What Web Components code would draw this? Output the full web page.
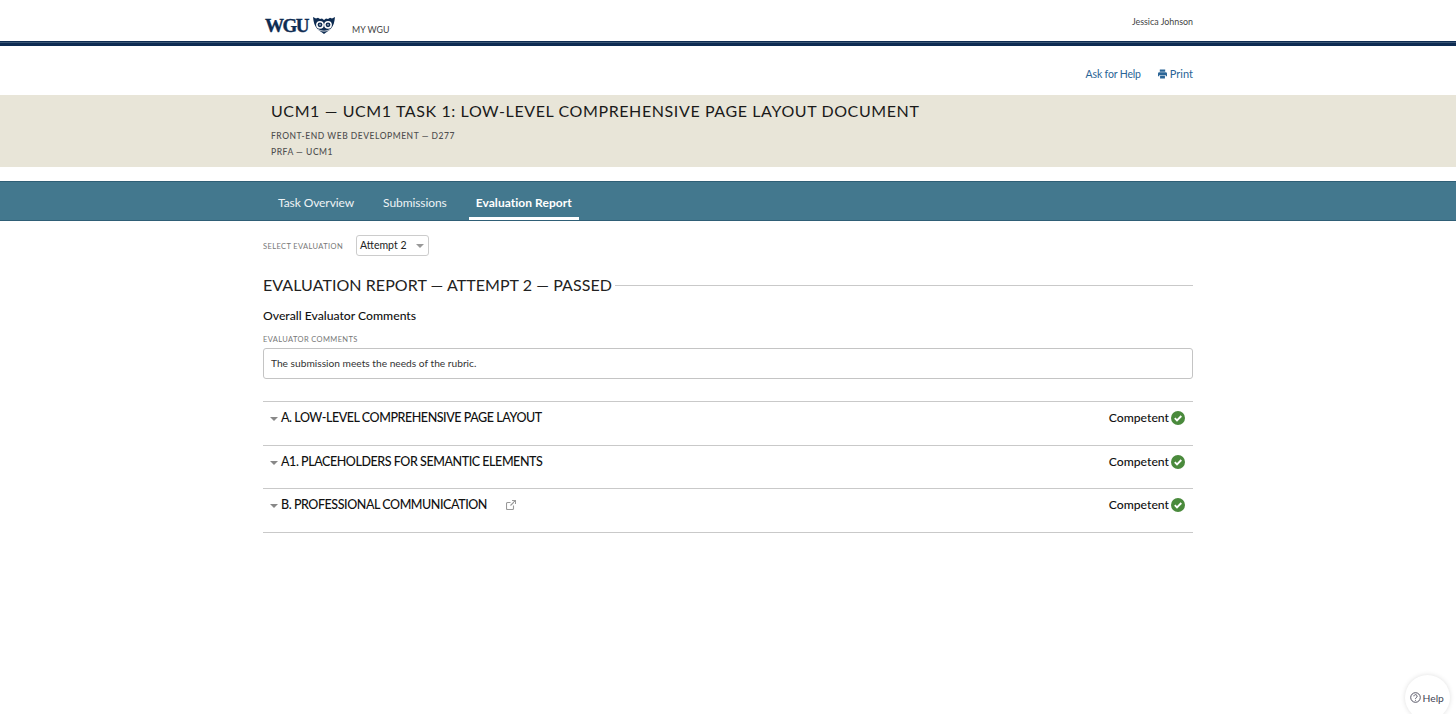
<!DOCTYPE html>
<html><head><meta charset="utf-8"><style>
html,body{margin:0;padding:0;background:#fff;font-family:Lato,sans-serif;color:#111}
body{height:714px;overflow:hidden;position:relative}
</style></head><body>
<wgu-header></wgu-header>
<util-bar></util-bar>
<title-banner></title-banner>
<tab-bar></tab-bar>
<report-body>
  <eval-select></eval-select>
  <report-heading>EVALUATION REPORT — ATTEMPT 2 — PASSED</report-heading>
  <overall-comments></overall-comments>
  <rubric-list>
    <rubric-row title="A. LOW-LEVEL COMPREHENSIVE PAGE LAYOUT"></rubric-row>
    <rubric-row title="A1. PLACEHOLDERS FOR SEMANTIC ELEMENTS"></rubric-row>
    <rubric-row title="B. PROFESSIONAL COMMUNICATION" link></rubric-row>
  </rubric-list>
</report-body>
<help-fab></help-fab>
<script>
function def(name,html){customElements.define(name,class extends HTMLElement{
  connectedCallback(){if(this.shadowRoot)return;const r=this.attachShadow({mode:'open'});r.innerHTML=typeof html==='function'?html(this):html;}
});}
const wrap='width:930px;margin:0 auto;box-sizing:border-box;';
def('wgu-header',`<style>
:host{display:block;height:46px;box-sizing:border-box;border-bottom:3px solid #0e2c52;position:relative}
.w{${wrap}height:41px;display:flex;align-items:flex-start}
.l1{height:1px;background:#0e2c52}.l2{height:1px;background:#3a5675}
.logo{display:flex;align-items:center;margin:17px 0 0 2px;height:17px;gap:5px}
.t{font:bold 19px/17px "Liberation Serif",serif;color:#0e2c52;letter-spacing:-1.500px;-webkit-text-stroke:.35px #0e2c52}
.my{font-size:8.800px;color:#444;margin:20px 0 0 17px;line-height:20px}
.u{margin-left:auto;font-size:8.900px;color:#444;line-height:12px;margin-top:16px}
</style><div class="w"><div class="logo"><span class="t">WGU</span>
<svg width="22" height="17" viewBox="0 0 22 17"><path d="M0 0 L3 1.500 L5 .8 L7 2 L9 1.500 L11 3 L13 1.500 L15 2 L17 .8 L19 1.500 L22 0 C21.500 5 20.500 9 18 11.500 C16 14 13 15 11 17 C9 15 6 14 4 11.500 C1.500 9 .5 5 0 0Z" fill="#0e2c52"/><circle cx="7" cy="7.800" r="3.900" fill="#fff"/><circle cx="15" cy="7.800" r="3.900" fill="#fff"/><circle cx="7" cy="7.800" r="2.400" fill="#0e2c52"/><circle cx="15" cy="7.800" r="2.400" fill="#0e2c52"/><circle cx="7" cy="7.800" r="1" fill="#8b9ab0"/><circle cx="15" cy="7.800" r="1" fill="#8b9ab0"/><path d="M4.500 12.300 Q11 16 17.500 12.300" stroke="#fff" stroke-width=".8" fill="none"/></svg></div>
<span class="my">MY WGU</span><span class="u">Jessica Johnson</span></div><div class="l1"></div><div class="l2"></div>`);
def('util-bar',`<style>
:host{display:block;height:49px}
.w{${wrap}display:flex;justify-content:flex-end;align-items:center;gap:17px;padding-top:21px;font-size:11px;line-height:14px;color:#2a6496}
.a{font-size:10.500px;letter-spacing:-.16px}
.p{display:flex;align-items:center;gap:3px}
</style><div class="w"><span class="a">Ask for Help</span><span class="p"><svg width="9" height="10" viewBox="0 0 10 11" fill="#2a6496"><path d="M2 .5h6v2.500H2Z"/><path d="M1.500 3.500h7A1.500 1.500 0 0 1 10 5v3H8.500V6.500h-7V8H0V5a1.500 1.500 0 0 1 1.500-1.500Z"/><rect x="2.300" y="7.200" width="5.400" height="3.300"/></svg>Print</span></div>`);
def('title-banner',`<style>
:host{display:block;height:72px;background:#e8e5d8}
.w{${wrap}padding:6px 0 0 8px}
h1{margin:0;font-weight:400;font-size:16px;line-height:20px;letter-spacing:.6px;color:#1a1a1a}
p{margin:0;font-size:8.500px;font-weight:500;letter-spacing:.53px;color:#4f4f4f;line-height:16px}
.a{margin-top:7px}
</style><div class="w"><h1>UCM1 — UCM1 TASK 1: LOW-LEVEL COMPREHENSIVE PAGE LAYOUT DOCUMENT</h1><p class="a">FRONT-END WEB DEVELOPMENT — D277</p><p>PRFA — UCM1</p></div>`);
def('tab-bar',`<style>
:host{display:block;height:40px;margin-top:14px;background:#43788e;border-top:1px solid #2f5f76;border-bottom:1px solid #2f5f76;box-sizing:border-box}
.w{${wrap}display:flex;height:38px;padding-left:8px;gap:15px}
a{display:block;padding:0 7px;font-size:12px;letter-spacing:-.08px;line-height:41px;color:#eef3f5;height:38px;box-sizing:border-box}
a.on{font-weight:700;color:#fff;letter-spacing:.05px;border-bottom:3px solid #fff}
</style><div class="w"><a>Task Overview</a><a>Submissions</a><a class="on">Evaluation Report</a></div>`);
def('report-body',`<style>:host{display:block;${wrap}padding-top:14px}</style><slot></slot>`);
def('eval-select',`<style>
:host{display:flex;align-items:center;height:21px}
.l{font-size:7.500px;letter-spacing:.38px;color:#777;width:93px;padding-top:1px}
.s{box-sizing:border-box;width:73px;height:21px;border:1px solid #ccc;border-radius:3px;display:flex;align-items:center;padding:0 0 1px 3px;font-size:10.500px;color:#222;position:relative}
i{position:absolute;right:4px;top:8px;border:4px solid transparent;border-top-color:#999;border-bottom:0}
</style><span class="l">SELECT EVALUATION</span><span class="s">Attempt 2<i></i></span>`);
def('report-heading',`<style>
:host{display:flex;align-items:center;margin-top:19px;height:20px;font-size:16px;line-height:20px;color:#222;letter-spacing:.06px;white-space:nowrap}
:host::after{content:"";flex:1;height:1px;background:#c9c9c9;margin-left:3px}
</style><slot></slot>`);
def('overall-comments',`<style>
:host{display:block;margin-top:13px}
h3{margin:0;font-size:12.200px;line-height:16px;font-weight:500;color:#111}
.l{font-size:7.500px;letter-spacing:.38px;color:#777;margin-top:11px;line-height:10px}
.b{box-sizing:border-box;height:31px;margin-top:3px;border:1px solid #c4c4c4;border-radius:3px;padding:0 7px;font-size:10.200px;line-height:29px;color:#333}
</style><h3>Overall Evaluator Comments</h3><div class="l">EVALUATOR COMMENTS</div><div class="b">The submission meets the needs of the rubric.</div>`);
def('rubric-list',`<style>:host{display:block;margin-top:22px;border-bottom:1px solid #c9c9c9}</style><slot></slot>`);
def('rubric-row',h=>`<style>
:host{display:flex;box-sizing:border-box;height:43.500px;border-top:1px solid #c9c9c9;padding:8px 8px 0 7px;align-items:flex-start}
i.c{border:4px solid transparent;border-top-color:#888;border-bottom:0;margin:7px 3px 0 0}
.t{font-size:12.500px;line-height:15px;font-weight:500;color:#111;letter-spacing:-.44px;white-space:nowrap}
.x{margin:3px 0 0 19px}
.r{margin-left:auto;display:flex;align-items:center;gap:2px;font-size:12.200px;line-height:16px;color:#111;font-weight:500}
</style><i class="c"></i><span class="t">${h.getAttribute('title')}</span>${h.hasAttribute('link')?`<svg class="x" width="10" height="10" viewBox="0 0 10 10" fill="none" stroke="#999" stroke-width="1.100"><path d="M7.500 5.500v3a1 1 0 0 1-1 1h-5a1 1 0 0 1-1-1v-5a1 1 0 0 1 1-1h3"/><path d="M6 .5h3.500V4M9.500 .5 4.500 5.500"/></svg>`:''}
<span class="r">Competent<svg width="14" height="14" viewBox="0 0 14 14"><circle cx="7" cy="7" r="7" fill="#4a8a3c"/><path d="M3.800 7.200 6 9.400 10.300 5" fill="none" stroke="#fff" stroke-width="1.900"/></svg></span>`);
def('help-fab',`<style>
:host{position:absolute;left:1405px;top:675px;width:45px;height:45px;border-radius:50%;background:#fff;box-shadow:0 0 5px rgba(0,0,0,.13);display:flex;align-items:center;gap:2px;box-sizing:border-box;padding:0 0 0 4.500px;font-size:10.300px;color:#445}
svg{flex:none}
</style><svg width="11" height="11" viewBox="0 0 11 11" fill="none" stroke="#445" stroke-width=".9"><circle cx="5.500" cy="5.500" r="4.800"/><path d="M3.900 4.300a1.600 1.600 0 1 1 2.500 1.300c-.6.4-.9.600-.9 1.200"/><path d="M5.500 7.900v.8"/></svg><span>Help</span>`);
</script>
</body></html>
